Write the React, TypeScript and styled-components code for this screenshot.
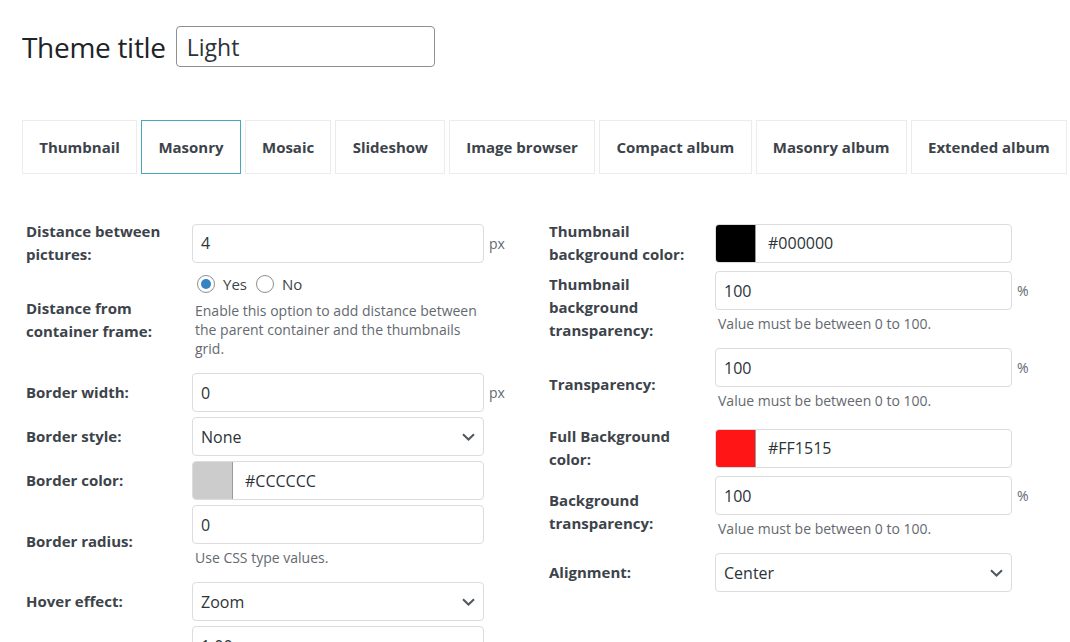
import React from 'react';
import styled, { createGlobalStyle } from 'styled-components';

const GlobalStyle = createGlobalStyle`
  body {
    margin: 0;
    background: #ffffff;
    font-family: "Open Sans", "Noto Sans", Arial, sans-serif;
    color: #3c434a;
  }
`;

const Page = styled.div`
  padding: 26px 1px 0 22px;
`;

const TitleRow = styled.div`
  display: flex;
  align-items: center;
  gap: 10px;
`;

const Title = styled.h1`
  margin: 0;
  font-size: 28px;
  font-weight: 400;
  color: #1d2327;
  letter-spacing: -0.3px;
`;

const TitleInput = styled.div`
  box-sizing: border-box;
  width: 259px;
  height: 41px;
  border: 1px solid #8c8f94;
  border-radius: 4px;
  padding: 0 10px;
  display: flex;
  align-items: center;
  font-size: 23px;
  color: #2c3338;
`;

const Tabs = styled.div`
  display: flex;
  gap: 4px;
  margin-top: 53px;
  padding-right: 2px;
`;

const Tab = styled.div<{ $active?: boolean }>`
  flex: 1 1 auto;
  box-sizing: border-box;
  height: 54px;
  padding: 0 12px;
  display: flex;
  align-items: center;
  justify-content: center;
  white-space: nowrap;
  border: 1px solid ${(p) => (p.$active ? '#44a8bf' : '#ececec')};
  font-size: 15px;
  font-weight: 700;
  color: #3c434a;
`;

const Columns = styled.div`
  display: grid;
  grid-template-columns: 523px 1fr;
  margin-top: 46px;
`;

const Column = styled.div<{ $inputWidth: number }>`
  --input-w: ${(p) => p.$inputWidth}px;
  display: flex;
  flex-direction: column;
  gap: 5px;
  padding-left: 4px;
`;

const Row = styled.div`
  display: grid;
  grid-template-columns: 166px 1fr;
  align-items: center;
`;

const Label = styled.div`
  font-size: 15px;
  font-weight: 700;
  line-height: 23px;
  color: #3c434a;
  padding-right: 10px;
`;

const Control = styled.div`
  display: flex;
  flex-direction: column;
`;

const Field = styled.div`
  display: flex;
  align-items: center;
`;

const Input = styled.div`
  box-sizing: border-box;
  width: var(--input-w);
  height: 39px;
  border: 1px solid #dcdcde;
  border-radius: 4px;
  padding: 0 8px;
  display: flex;
  align-items: center;
  justify-content: space-between;
  font-size: 16px;
  color: #2c3338;
  overflow: hidden;
`;

const Unit = styled.span`
  margin-left: 5px;
  font-size: 14px;
  color: #646970;
`;

const Swatch = styled.span<{ $color: string }>`
  align-self: stretch;
  width: 39px;
  margin-left: -8px;
  margin-right: 12px;
  background: ${(p) => p.$color};
  border-right: 1px solid #9a9a9a;
`;

const ColorText = styled.span`
  flex: 1;
`;

const Hint = styled.p`
  margin: 4px 0 10px 3px;
  width: 296px;
  font-size: 14px;
  line-height: 19px;
  color: #646970;
`;

const RadioLine = styled.div`
  display: flex;
  align-items: center;
  height: 26px;
  padding-left: 5px;
  font-size: 15px;
  color: #3c434a;
`;

const Radio = styled.span<{ $checked?: boolean }>`
  box-sizing: border-box;
  width: 18px;
  height: 18px;
  border-radius: 50%;
  border: 1px solid #8c8f94;
  margin-right: 8px;
  display: inline-flex;
  align-items: center;
  justify-content: center;
  &::before {
    content: '';
    width: 10px;
    height: 10px;
    border-radius: 50%;
    background: ${(p) => (p.$checked ? '#3582c4' : 'transparent')};
  }
`;

const RadioText = styled.span`
  margin-right: 9px;
`;

const Chevron = () => (
  <svg width="13" height="8" viewBox="0 0 13 8" fill="none">
    <path d="M1 1.2l5.5 5.3 5.5-5.3" stroke="#50575e" strokeWidth="2" />
  </svg>
);

const tabs = [
  'Thumbnail',
  'Masonry',
  'Mosaic',
  'Slideshow',
  'Image browser',
  'Compact album',
  'Masonry album',
  'Extended album',
];

const rangeHint = 'Value must be between 0 to 100.';

export default function App() {
  return (
    <>
      <GlobalStyle />
      <Page>
        <TitleRow>
          <Title>Theme title</Title>
          <TitleInput>Light</TitleInput>
        </TitleRow>

        <Tabs>
          {tabs.map((t) => (
            <Tab key={t} $active={t === 'Masonry'}>
              {t}
            </Tab>
          ))}
        </Tabs>

        <Columns>
          <Column $inputWidth={292}>
            <Row>
              <Label>Distance between pictures:</Label>
              <Field>
                <Input>4</Input>
                <Unit>px</Unit>
              </Field>
            </Row>
            <Row>
              <Label>Distance from container frame:</Label>
              <Control>
                <RadioLine>
                  <Radio $checked />
                  <RadioText>Yes</RadioText>
                  <Radio />
                  <RadioText>No</RadioText>
                </RadioLine>
                <Hint>
                  Enable this option to add distance between the parent container and the
                  thumbnails grid.
                </Hint>
              </Control>
            </Row>
            <Row>
              <Label>Border width:</Label>
              <Field>
                <Input>0</Input>
                <Unit>px</Unit>
              </Field>
            </Row>
            <Row>
              <Label>Border style:</Label>
              <Field>
                <Input>
                  None
                  <Chevron />
                </Input>
              </Field>
            </Row>
            <Row>
              <Label>Border color:</Label>
              <Field>
                <Input>
                  <Swatch $color="#cccccc" />
                  <ColorText>#CCCCCC</ColorText>
                </Input>
              </Field>
            </Row>
            <Row>
              <Label>Border radius:</Label>
              <Control>
                <Input>0</Input>
                <Hint>Use CSS type values.</Hint>
              </Control>
            </Row>
            <Row>
              <Label>Hover effect:</Label>
              <Field>
                <Input>
                  Zoom
                  <Chevron />
                </Input>
              </Field>
            </Row>
            <Row>
              <Label></Label>
              <Field>
                <Input>1.00</Input>
              </Field>
            </Row>
          </Column>

          <Column $inputWidth={297}>
            <Row>
              <Label>Thumbnail background color:</Label>
              <Field>
                <Input>
                  <Swatch $color="#000000" />
                  <ColorText>#000000</ColorText>
                </Input>
              </Field>
            </Row>
            <Row>
              <Label>Thumbnail background transparency:</Label>
              <Control>
                <Field>
                  <Input>100</Input>
                  <Unit>%</Unit>
                </Field>
                <Hint>{rangeHint}</Hint>
              </Control>
            </Row>
            <Row>
              <Label>Transparency:</Label>
              <Control>
                <Field>
                  <Input>100</Input>
                  <Unit>%</Unit>
                </Field>
                <Hint>{rangeHint}</Hint>
              </Control>
            </Row>
            <Row>
              <Label>Full Background color:</Label>
              <Field>
                <Input>
                  <Swatch $color="#ff1515" />
                  <ColorText>#FF1515</ColorText>
                </Input>
              </Field>
            </Row>
            <Row>
              <Label>Background transparency:</Label>
              <Control>
                <Field>
                  <Input>100</Input>
                  <Unit>%</Unit>
                </Field>
                <Hint>{rangeHint}</Hint>
              </Control>
            </Row>
            <Row>
              <Label>Alignment:</Label>
              <Field>
                <Input>
                  Center
                  <Chevron />
                </Input>
              </Field>
            </Row>
          </Column>
        </Columns>
      </Page>
    </>
  );
}
